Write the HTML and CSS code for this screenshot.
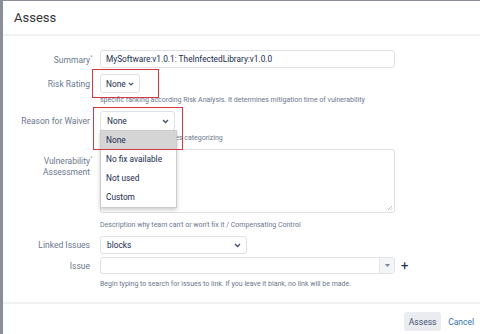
FILE: index.html
```html
<!DOCTYPE html>
<html lang="en">
  <head>
    <meta charset="utf-8" />
    <title>Assess</title>
    <link rel="stylesheet" href="styles.css">
  </head>
  <body>
    <div class="dialog">
      <header class="dialog-header">
        <h2 class="dialog-title">Assess</h2>
      </header>
      <div class="dialog-body">
        <div class="field">
          <div class="label">Summary<span class="req">*</span></div>
          <div class="input summary">MySoftware:v1.0.1: TheInfectedLibrary:v1.0.0</div>
        </div>
        <div class="field risk-row">
          <div class="label">Risk Rating</div>
          <div class="select risk">
            <span>None</span>
            <svg class="chev" width="6" height="4" viewBox="0 0 6 4"><path d="M0.8 0.8l2.2 2.2 2.2-2.2" fill="none" stroke="#42526e" stroke-width="1.2"/></svg>
            <div class="mark mark-risk"></div>
          </div>
        </div>
        <div class="hint">specific ranking according Risk Analysis. It determines mitigation time of vulnerability</div>
        <div class="field reason-row">
          <div class="label">Reason for Waiver</div>
          <div class="select reason">
            <span>None</span>
            <svg class="chev" width="7" height="5" viewBox="0 0 7 5"><path d="M1 1l2.5 2.5L6 1" fill="none" stroke="#42526e" stroke-width="1.3"/></svg>
            <ul class="options">
              <li class="active">None</li>
              <li>No fix available</li>
              <li>Not used</li>
              <li>Custom</li>
            </ul>
            <div class="mark mark-reason"></div>
          </div>
        </div>
        <div class="hint hint-reason">Reason of waiver in issues categorizing</div>
        <div class="field area-row">
          <div class="label">Vulnerability<span class="req">*</span><br>Assessment</div>
          <div class="input area">
            <svg class="grip" width="6" height="6" viewBox="0 0 6 6"><path d="M5 1L1 5M5 3.5L3.5 5" stroke="#aaa" stroke-width="0.8"/></svg>
          </div>
        </div>
        <div class="hint hint-area">Description why team can't or won't fix it / Compensating Control</div>
        <div class="field linked-row">
          <div class="label">Linked Issues</div>
          <div class="select linked">
            <span>blocks</span>
            <svg class="chev" width="7" height="5" viewBox="0 0 7 5"><path d="M1 1l2.5 2.5L6 1" fill="none" stroke="#42526e" stroke-width="1.3"/></svg>
          </div>
        </div>
        <div class="field issue-row">
          <div class="label">Issue</div>
          <div class="input issue">
            <div class="drop"><svg width="5" height="3" viewBox="0 0 5 3"><path d="M0 0h5L2.5 3z" fill="#7a869a"/></svg></div>
          </div>
          <span class="plus">+</span>
        </div>
        <div class="hint hint-issue">Begin typing to search for issues to link. If you leave it blank, no link will be made.</div>
      </div>
      <footer class="dialog-footer">
        <button class="btn">Assess</button>
        <a href="#" class="cancel">Cancel</a>
      </footer>
    </div>
  </body>
</html>
```
FILE: styles.css
```css
body {
  margin: 0;
  background-color: #8a8e96;
  font-family: Roboto, "Open Sans", sans-serif;
  color: #172b4d;
}

.dialog {
  margin: 1px 0 0 3px;
  height: 333px;
  background-color: #fff;
}
.dialog-header {
  height: 33px;
  border-bottom: 2px solid #f0f1f3;
  display: flex;
  align-items: center;
  padding-left: 11px;
}
.dialog-title {
  margin: 0;
  font-size: 13px;
  font-weight: normal;
  color: #333;
}

.dialog-body {
  padding-top: 14px;
  border-bottom: 2px solid #f0f1f3;
  box-sizing: border-box;
  height: 268px;
}
.field {
  display: flex;
  align-items: center;
}
.label {
  width: 97px;
  padding-right: 10px;
  box-sizing: border-box;
  text-align: right;
  font-size: 8.5px;
  color: #6b778c;
  flex-shrink: 0;
}
.req {
  display: inline-block;
  width: 0;
  font-size: 6px;
  vertical-align: 4px;
  color: #8a94a6;
}

.input,
.select {
  border: 1px solid #dfe1e6;
  border-radius: 3px;
  box-sizing: border-box;
  font-size: 8.3px;
  display: flex;
  align-items: center;
  padding-left: 5px;
  position: relative;
  background-color: #fff;
}
.summary {
  width: 295px;
  height: 18px;
}
.select {
  justify-content: space-between;
  padding-left: 6px;
  padding-right: 5px;
}
.risk-row {
  margin-top: 6px;
}
.risk {
  width: 40px;
  height: 19px;
  padding-left: 5px;
}
.reason-row {
  margin-top: 6px;
}
.reason {
  width: 75px;
  height: 20px;
}
.area-row {
  margin-top: 6px;
  align-items: flex-start;
}
.area-row .label {
  padding-top: 3px;
  line-height: 11px;
}
.area {
  width: 295px;
  height: 64px;
}
.grip {
  position: absolute;
  right: 1px;
  bottom: 1px;
}
.linked-row {
  margin-top: 6px;
}
.linked {
  width: 147px;
  height: 18px;
}
.issue-row {
  margin-top: 3px;
}
.issue {
  width: 295px;
  height: 17px;
  justify-content: flex-end;
  padding-left: 0;
}
.drop {
  width: 14px;
  height: 15px;
  background-color: #f4f5f7;
  border-left: 1px solid #e6e8ec;
  display: flex;
  align-items: center;
  justify-content: center;
}
.plus {
  margin-left: 6px;
  font-size: 13px;
  line-height: 1;
  color: #172b4d;
}

.hint {
  margin: 2px 0 0 97px;
  line-height: 10px;
  font-size: 7px;
  color: #6b778c;
}
.hint-area {
  margin-top: 7px;
}
.hint-issue {
  margin-top: 5px;
}

.options {
  position: absolute;
  top: 100%;
  left: -1px;
  width: 75px;
  margin: 0;
  padding: 0;
  list-style: none;
  background-color: #fff;
  border: 1px solid #ccc;
  box-shadow: 0 2px 4px rgba(0, 0, 0, 0.2);
  z-index: 5;
}
.options li {
  height: 19px;
  line-height: 19px;
  padding-left: 5px;
  font-size: 8.3px;
  color: #172b4d;
}
.options li.active {
  background-color: #d5d5d5;
}

.mark {
  position: absolute;
  border: 1.5px solid #d9373f;
  z-index: 10;
}
.mark-risk {
  left: -9px;
  top: -6px;
  width: 65px;
  height: 27px;
}
.mark-reason {
  left: -8px;
  top: -5px;
  width: 88px;
  height: 41px;
}

.dialog-footer {
  display: flex;
  justify-content: flex-end;
  align-items: center;
  padding: 8px 6px 0 0;
}
.btn {
  border: none;
  border-radius: 3px;
  background-color: #ebecf0;
  color: #42526e;
  font-family: inherit;
  font-size: 8.5px;
  height: 19px;
  width: 37px;
  padding: 0;
}
.cancel {
  margin-left: 7px;
  font-size: 8.5px;
  color: #3572b0;
  text-decoration: none;
}
```
